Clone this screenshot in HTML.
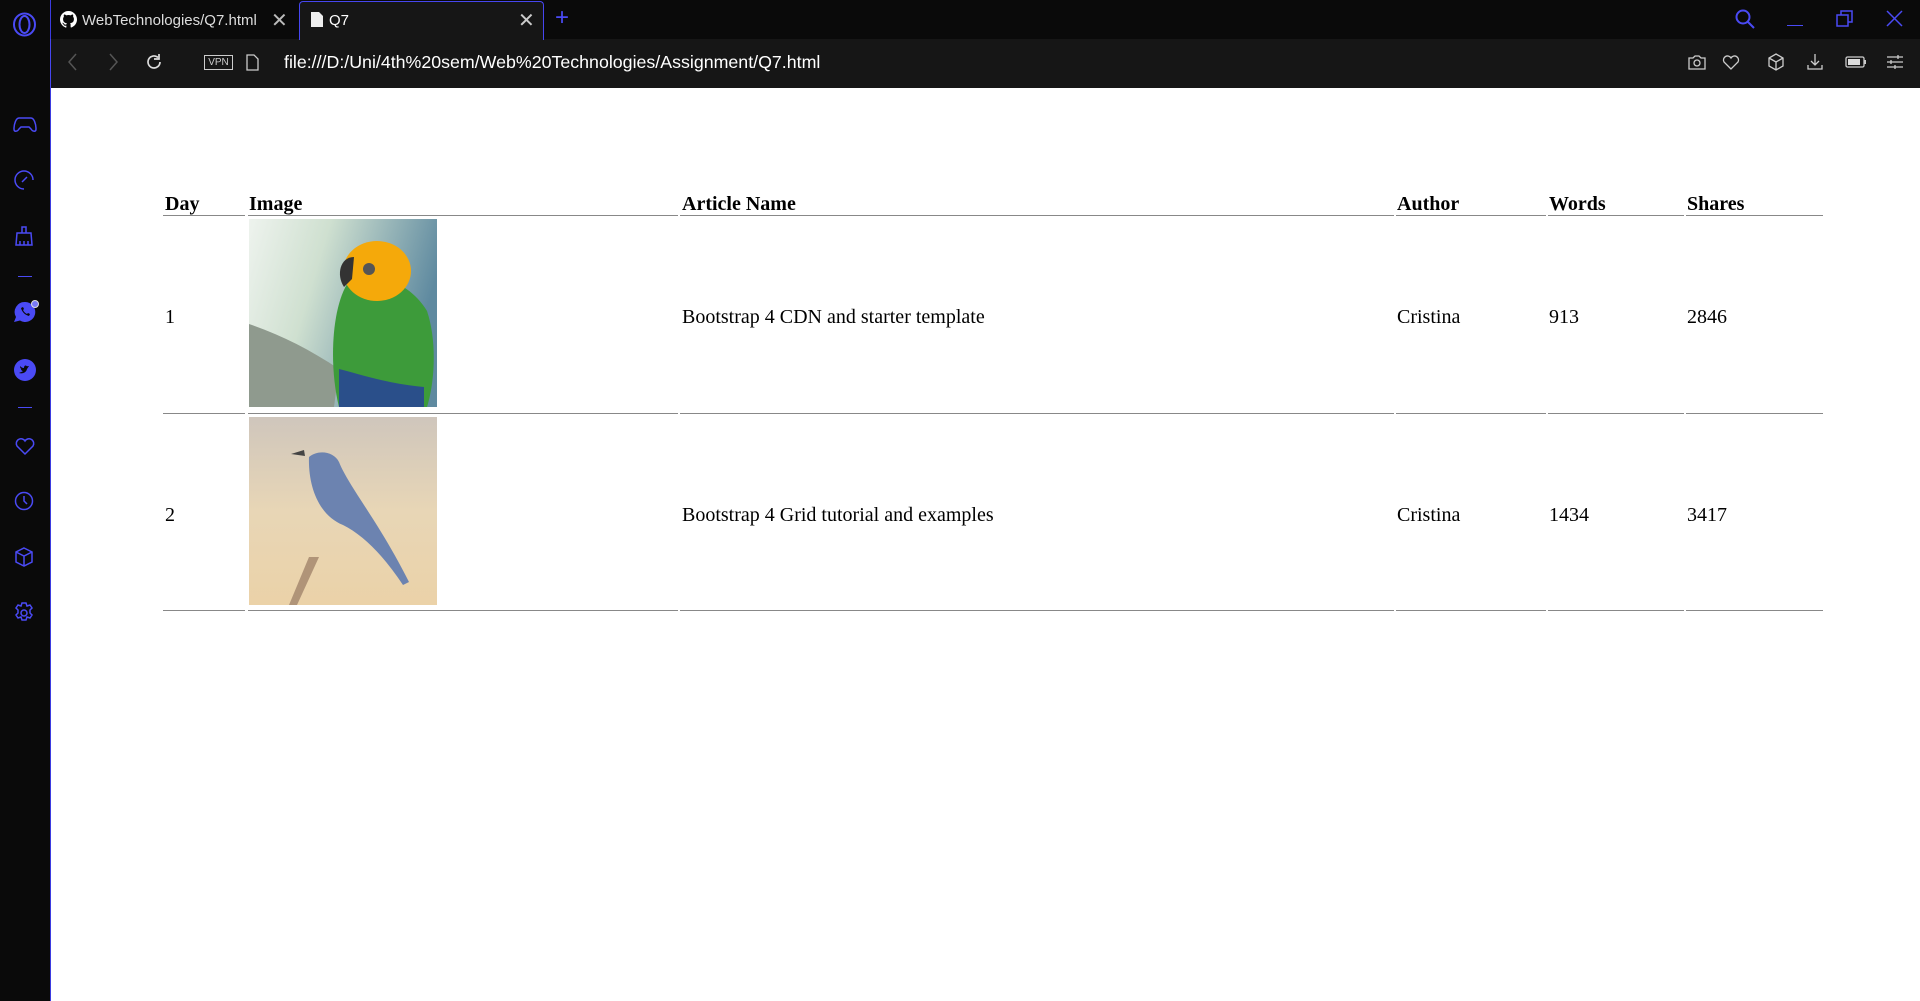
<!DOCTYPE html>
<html><head><meta charset="utf-8"><style>
*{margin:0;padding:0;box-sizing:border-box}
body{width:1920px;height:1001px;background:#fff;position:relative;overflow:hidden;font-family:"Liberation Sans",sans-serif}
.a{position:absolute}
.side{left:0;top:0;width:51px;height:1001px;background:#0a0a0a;border-right:1px solid #3b3be0}
.tabs{left:0;top:0;width:1920px;height:39px;background:#0a0a0a}
.addr{left:50px;top:39px;width:1870px;height:49px;background:#161616;border-left:1px solid #4646f0}
.tab{left:299px;top:1px;width:245px;height:39px;background:#161616;border:1px solid #4646f0;border-bottom:none;border-radius:4px 4px 0 0}
.t{font-family:"Liberation Serif",serif;font-size:20px;color:#000;white-space:nowrap}
.b{font-weight:bold}
.ln{height:1px;background:#888}
</style></head><body>
<div class="a tabs"></div>
<div class="a side"></div>
<div class="a addr"></div>
<div class="a tab"></div>
<svg class="a" style="left:12px;top:12px" width="25" height="25" viewBox="0 0 25 25"><ellipse cx="12.5" cy="12.5" rx="10.5" ry="11" fill="none" stroke="#4a4af5" stroke-width="2"/><ellipse cx="12.5" cy="12.5" rx="5" ry="8.5" fill="none" stroke="#4a4af5" stroke-width="2"/></svg>
<svg class="a" style="left:60px;top:11px" width="17" height="17" viewBox="0 0 16 16"><path fill="#fff" d="M8 0C3.6 0 0 3.6 0 8c0 3.5 2.3 6.5 5.5 7.6.4.1.5-.2.5-.4v-1.4c-2.2.5-2.7-1-2.7-1-.4-.9-.9-1.2-.9-1.2-.7-.5.1-.5.1-.5.8.1 1.200.8 1.2.8.7 1.3 1.9.9 2.3.7.1-.5.3-.9.5-1.1-1.8-.2-3.6-.9-3.6-4 0-.9.3-1.6.8-2.1-.1-.2-.4-1 .1-2.1 0 0 .7-.2 2.2.8.6-.2 1.3-.3 2-.3s1.4.1 2 .3c1.500-1 2.2-.8 2.2-.8.4 1.1.2 1.9.1 2.1.5.6.8 1.3.8 2.1 0 3.1-1.9 3.7-3.6 3.9.3.3.5.8.5 1.500v2.2c0 .2.1.5.6.4C13.700 14.5 16 11.5 16 8c0-4.4-3.6-8-8-8z"/></svg>
<div class="a" style="left:82px;top:12px;font-size:15px;color:#ddd;width:180px;overflow:hidden;white-space:nowrap">WebTechnologies/Q7.html</div>
<div class="a" style="left:271px;top:8px;font-size:20px;color:#bbb">✕</div>
<svg class="a" style="left:310px;top:11px" width="14" height="17" viewBox="0 0 14 17"><path d="M1 1h8l4 4v11H1z" fill="#eee"/></svg>
<div class="a" style="left:329px;top:12px;font-size:15px;color:#fff">Q7</div>
<div class="a" style="left:518px;top:8px;font-size:20px;color:#ccc">✕</div>
<div class="a" style="left:555px;top:4px;font-size:24px;color:#4a4af5">+</div>
<svg class="a" style="left:1734px;top:8px" width="22" height="22" viewBox="0 0 22 22"><circle cx="9" cy="9" r="6.5" fill="none" stroke="#4a4af5" stroke-width="2"/><path d="M14 14l6 6" stroke="#4a4af5" stroke-width="2"/></svg>
<div class="a" style="left:1787px;top:25px;width:16px;height:1px;background:#4a4af5"></div>
<svg class="a" style="left:1836px;top:10px" width="18" height="18" viewBox="0 0 18 18"><rect x="1" y="5" width="11" height="11" fill="none" stroke="#4a4af5" stroke-width="1.5"/><path d="M5 5V1h11v11h-4" fill="none" stroke="#4a4af5" stroke-width="1.5"/></svg>
<svg class="a" style="left:1886px;top:10px" width="17" height="17" viewBox="0 0 17 17"><path d="M1 1l15 15M16 1L1 16" stroke="#4a4af5" stroke-width="1.5"/></svg>
<svg class="a" style="left:66px;top:53px" width="14" height="18" viewBox="0 0 14 18"><path d="M10 1L3 9l7 8" fill="none" stroke="#555" stroke-width="1.5"/></svg>
<svg class="a" style="left:106px;top:53px" width="14" height="18" viewBox="0 0 14 18"><path d="M4 1l7 8-7 8" fill="none" stroke="#555" stroke-width="1.5"/></svg>
<svg class="a" style="left:144px;top:52px" width="20" height="20" viewBox="0 0 20 20"><path d="M16 10a6 6 0 1 1-2-4.5" fill="none" stroke="#ddd" stroke-width="1.7"/><path d="M15 2v5h-5" fill="none" stroke="#ddd" stroke-width="1.7"/></svg>
<div class="a" style="left:204px;top:55px;width:29px;height:15px;border:1px solid #ccc;color:#ccc;font-size:10px;line-height:13px;text-align:center">VPN</div>
<svg class="a" style="left:246px;top:54px" width="13" height="17" viewBox="0 0 13 17"><path d="M1 1h7l4 4v11H1z" fill="none" stroke="#ccc" stroke-width="1.3"/></svg>
<div class="a" style="left:284px;top:52px;font-size:17.8px;color:#fff">file:///D:/Uni/4th%20sem/Web%20Technologies/Assignment/Q7.html</div>
<svg class="a" style="left:1688px;top:53px" width="18" height="18" viewBox="0 0 18 18"><path d="M1 5h4l2-2h4l2 2h4v11H1z" fill="none" stroke="#ccc" stroke-width="1.3"/><circle cx="9" cy="10" r="3" fill="none" stroke="#ccc" stroke-width="1.3"/></svg>
<svg class="a" style="left:1722px;top:53px" width="18" height="18" viewBox="0 0 18 18"><path d="M9 16L2 9a3.8 3.8 0 0 1 7-4 3.8 3.8 0 0 1 7 4z" fill="none" stroke="#ccc" stroke-width="1.3"/></svg>
<svg class="a" style="left:1767px;top:53px" width="18" height="18" viewBox="0 0 18 18"><path d="M9 1l7 4v8l-7 4-7-4V5zM2 5l7 4 7-4M9 9v8" fill="none" stroke="#ccc" stroke-width="1.3"/></svg>
<svg class="a" style="left:1806px;top:53px" width="18" height="18" viewBox="0 0 18 18"><path d="M9 1v11M5 8l4 4 4-4M2 12v4h14v-4" fill="none" stroke="#ccc" stroke-width="1.3"/></svg>
<svg class="a" style="left:1845px;top:55px" width="22" height="14" viewBox="0 0 22 14"><rect x="1" y="2" width="18" height="10" rx="1.5" fill="none" stroke="#ccc" stroke-width="1.3"/><rect x="3" y="4" width="12" height="6" fill="#ddd"/><rect x="19" y="5" width="2" height="4" fill="#ccc"/></svg>
<svg class="a" style="left:1886px;top:53px" width="18" height="18" viewBox="0 0 18 18"><path d="M1 4h16M1 9h16M1 14h16M12 2v4M5 7v4M9 12v4" stroke="#ccc" stroke-width="1.3"/></svg>
<svg class="a" style="left:13px;top:116px" width="24" height="18" viewBox="0 0 24 18"><path d="M6 2h12c3 0 5 6 5 11 0 3-3 3-5 0l-2-2H8l-2 2c-2 3-5 3-5 0C1 8 3 2 6 2z" fill="none" stroke="#4a4af5" stroke-width="1.5"/></svg>
<svg class="a" style="left:13px;top:169px" width="22" height="22" viewBox="0 0 22 22"><path d="M20 11A9 9 0 1 0 11 20" fill="none" stroke="#4a4af5" stroke-width="1.5"/><path d="M9 13l5-5" stroke="#4a4af5" stroke-width="1.5"/></svg>
<svg class="a" style="left:14px;top:226px" width="20" height="20" viewBox="0 0 20 20"><path d="M8 1h4v6H8zM3 7h14l1 12H2z M6 19v-4M10 19v-4M14 19v-4" fill="none" stroke="#4a4af5" stroke-width="1.5"/></svg>
<div class="a" style="left:18px;top:276px;width:14px;height:1px;background:#4a4af5"></div>
<svg class="a" style="left:13px;top:300px" width="26" height="24" viewBox="0 0 26 24"><path d="M12 2a10 10 0 1 1-5 18.5L1 22l2-5A10 10 0 0 1 12 2z" fill="#4a4af5"/><path d="M8 8c1 4 4 7 8 8l1-2-2-1-1 1c-2-1-3-2-4-4l1-1-1-2z" fill="#0a0a0a"/><circle cx="22" cy="4" r="3.5" fill="#7a7af7" stroke="#ddd"/></svg>
<svg class="a" style="left:13px;top:358px" width="24" height="24" viewBox="0 0 24 24"><circle cx="12" cy="12" r="11" fill="#4a4af5"/><path d="M6 15c3 1 7 0 8-4l2-3-2 .3C13 7 11 7 11 10c-2 0-3-1-4-2 0 2 1 3 2 3l-1 0c0 1 1 2 2 2-1 1-2 1-4 2z" fill="#0a0a0a"/></svg>
<div class="a" style="left:18px;top:407px;width:14px;height:1px;background:#4a4af5"></div>
<svg class="a" style="left:14px;top:436px" width="22" height="20" viewBox="0 0 22 20"><path d="M11 18L3 10a4.5 4.5 0 0 1 8-5 4.5 4.5 0 0 1 8 5z" fill="none" stroke="#4a4af5" stroke-width="1.5"/></svg>
<svg class="a" style="left:14px;top:491px" width="20" height="20" viewBox="0 0 20 20"><circle cx="10" cy="10" r="8.5" fill="none" stroke="#4a4af5" stroke-width="1.5"/><path d="M10 5v5l3 3" fill="none" stroke="#4a4af5" stroke-width="1.5"/></svg>
<svg class="a" style="left:14px;top:547px" width="20" height="20" viewBox="0 0 20 20"><path d="M10 1l8 4v10l-8 4-8-4V5zM2 5l8 4 8-4M10 9v10" fill="none" stroke="#4a4af5" stroke-width="1.5"/></svg>
<svg class="a" style="left:13px;top:602px" width="22" height="22" viewBox="0 0 22 22"><circle cx="11" cy="11" r="3" fill="none" stroke="#4a4af5" stroke-width="1.5"/><path d="M9 1h4l1 3 3-1 2 3-2 2v3l2 2-2 3-3-1-1 3H9l-1-3-3 1-2-3 2-2V8L3 6l2-3 3 1z" fill="none" stroke="#4a4af5" stroke-width="1.5"/></svg>

<div class="a t b" style="left:165px;top:193px">Day</div>
<div class="a t b" style="left:249px;top:193px">Image</div>
<div class="a t b" style="left:682px;top:193px">Article Name</div>
<div class="a t b" style="left:1397px;top:193px">Author</div>
<div class="a t b" style="left:1549px;top:193px">Words</div>
<div class="a t b" style="left:1687px;top:193px">Shares</div>
<div class="a ln" style="left:163px;top:215px;width:82px"></div><div class="a ln" style="left:248px;top:215px;width:430px"></div><div class="a ln" style="left:680px;top:215px;width:714px"></div><div class="a ln" style="left:1396px;top:215px;width:150px"></div><div class="a ln" style="left:1548px;top:215px;width:136px"></div><div class="a ln" style="left:1686px;top:215px;width:137px"></div>
<div class="a ln" style="left:163px;top:413px;width:82px"></div><div class="a ln" style="left:248px;top:413px;width:430px"></div><div class="a ln" style="left:680px;top:413px;width:714px"></div><div class="a ln" style="left:1396px;top:413px;width:150px"></div><div class="a ln" style="left:1548px;top:413px;width:136px"></div><div class="a ln" style="left:1686px;top:413px;width:137px"></div>
<div class="a ln" style="left:163px;top:610px;width:82px"></div><div class="a ln" style="left:248px;top:610px;width:430px"></div><div class="a ln" style="left:680px;top:610px;width:714px"></div><div class="a ln" style="left:1396px;top:610px;width:150px"></div><div class="a ln" style="left:1548px;top:610px;width:136px"></div><div class="a ln" style="left:1686px;top:610px;width:137px"></div>
<div class="a t" style="left:165px;top:306px">1</div>
<svg class="a" style="left:249px;top:219px" width="188" height="188" viewBox="0 0 188 188"><defs><linearGradient id="g1" x1="0" y1="0" x2="1" y2="0.3"><stop offset="0" stop-color="#eef3ee"/><stop offset=".4" stop-color="#cfe0d0"/><stop offset="1" stop-color="#5f8aa0"/></linearGradient></defs><rect width="188" height="188" fill="url(#g1)"/><path d="M0 105c30 10 60 25 90 45l-5 38H0z" fill="#8f9a8e"/><path d="M100 62c25-10 60 0 78 30 10 30 8 70 0 96H90c-10-40-8-100 10-126z" fill="#3d9b3a"/><path d="M90 150c20 5 50 15 85 18v20H90z" fill="#2a4f8a"/><ellipse cx="128" cy="52" rx="34" ry="30" fill="#f5a90a"/><circle cx="120" cy="50" r="6" fill="#555"/><path d="M105 38c-14 0-18 18-10 30l8-8z" fill="#333"/></svg>
<div class="a t" style="left:682px;top:306px">Bootstrap 4 CDN and starter template</div>
<div class="a t" style="left:1397px;top:306px">Cristina</div>
<div class="a t" style="left:1549px;top:306px">913</div>
<div class="a t" style="left:1687px;top:306px">2846</div>
<div class="a t" style="left:165px;top:504px">2</div>
<svg class="a" style="left:249px;top:417px" width="188" height="188" viewBox="0 0 188 188"><defs><linearGradient id="g2" x1="0" y1="0" x2="0" y2="1"><stop offset="0" stop-color="#cfc6bc"/><stop offset=".5" stop-color="#e8d6b6"/><stop offset="1" stop-color="#ebd2a8"/></linearGradient></defs><rect width="188" height="188" fill="url(#g2)"/><path d="M60 40c10-8 25-5 30 5 10 25 40 60 70 120l-6 3c-20-30-40-50-60-60-25-10-35-40-34-68z" fill="#6c83b0"/><path d="M55 33l-13 4 14 2z" fill="#444"/><path d="M60 140l-20 48h8l22-48z" fill="#b09478"/></svg>
<div class="a t" style="left:682px;top:504px">Bootstrap 4 Grid tutorial and examples</div>
<div class="a t" style="left:1397px;top:504px">Cristina</div>
<div class="a t" style="left:1549px;top:504px">1434</div>
<div class="a t" style="left:1687px;top:504px">3417</div>
</body></html>
